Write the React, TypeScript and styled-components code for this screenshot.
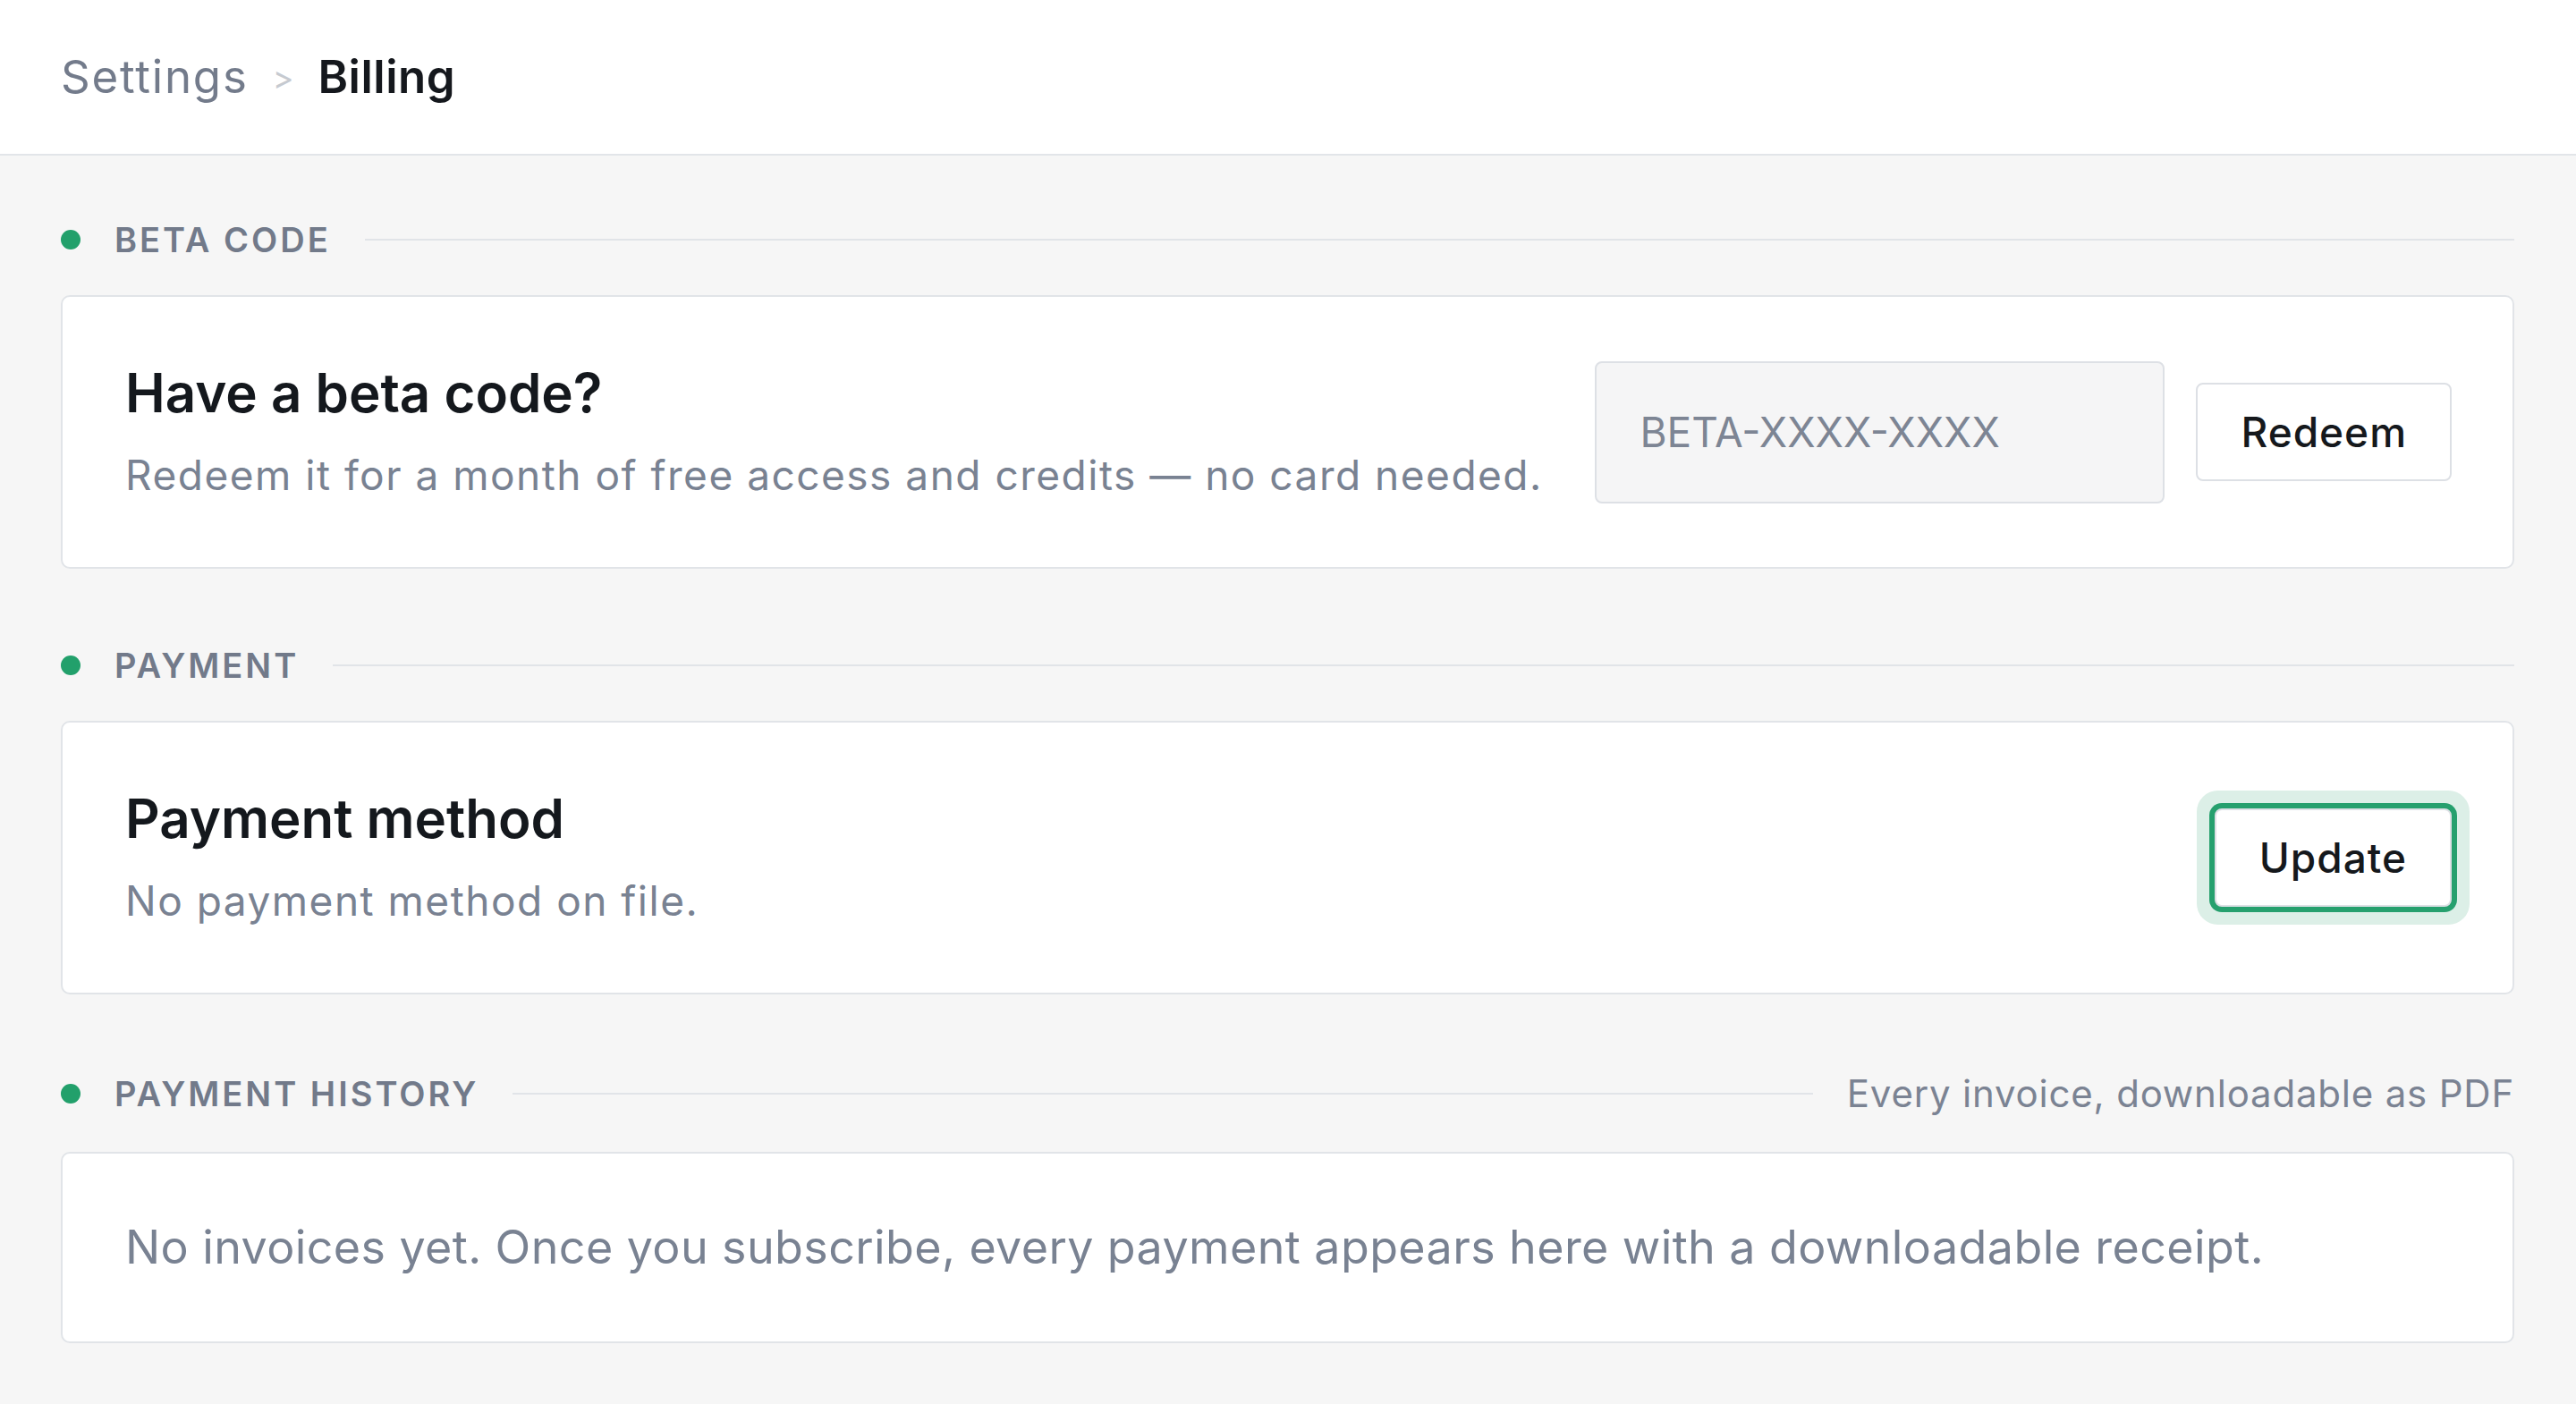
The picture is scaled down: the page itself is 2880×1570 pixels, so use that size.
import { FC, ReactNode } from "react";
import styled, { createGlobalStyle } from "styled-components";

const GlobalStyle = createGlobalStyle`
    html, body {
        margin: 0;
        padding: 0;
        background: #f6f6f6;
        font-family: Inter, "Noto Sans", "Liberation Sans", sans-serif;
    }
    * {
        box-sizing: border-box;
    }
`

type SectionProps = {
    title: string
    aside?: string
    children: ReactNode
}

const Section: FC<SectionProps> = ({ title, aside, children }) => (
    <SectionWrap>
        <SectionHead>
            <Dot />
            <Label>{title}</Label>
            <Rule />
            {aside && <Aside>{aside}</Aside>}
        </SectionHead>
        {children}
    </SectionWrap>
)

export default function App() {
    return <>
        <GlobalStyle />
        <Header>
            <Crumb>Settings</Crumb>
            <Sep>&gt;</Sep>
            <Current>Billing</Current>
        </Header>
        <Main>
            <Section title="Beta code">
                <Card>
                    <TextBlock>
                        <Title>Have a beta code?</Title>
                        <Desc>Redeem it for a month of free access and credits — no card needed.</Desc>
                    </TextBlock>
                    <CodeInput placeholder="BETA-XXXX-XXXX" />
                    <Button>Redeem</Button>
                </Card>
            </Section>
            <Section title="Payment">
                <Card>
                    <TextBlock>
                        <Title>Payment method</Title>
                        <Desc>No payment method on file.</Desc>
                    </TextBlock>
                    <Button focused>Update</Button>
                </Card>
            </Section>
            <Section title="Payment history" aside="Every invoice, downloadable as PDF">
                <Card compact>
                    <Empty>No invoices yet. Once you subscribe, every payment appears here with a downloadable receipt.</Empty>
                </Card>
            </Section>
        </Main>
    </>
}

const Header = styled.header`
    height: 174px;
    background: #fff;
    border-bottom: 2px solid #e2e5e9;
    display: flex;
    align-items: center;
    gap: 27px;
    padding: 0 68px 2px 68px;
`

const Crumb = styled.span`
    font-size: 51px;
    color: #737b8b;
    letter-spacing: 1.8px;
`

const Sep = styled.span`
    font-size: 36px;
    color: #c6cad0;
    margin-top: 4px;
`

const Current = styled.span`
    font-size: 51px;
    font-weight: 600;
    color: #15181d;
    letter-spacing: 0.5px;
`

const Main = styled.main`
    display: flex;
    flex-direction: column;
    gap: 88px;
    padding: 74px 69px 60px 68px;
`

const SectionWrap = styled.section`
    display: flex;
    flex-direction: column;
    gap: 42px;
`

const SectionHead = styled.div`
    min-height: 40px;
    display: flex;
    align-items: center;
`

const Dot = styled.span`
    width: 22px;
    height: 22px;
    border-radius: 50%;
    background: #22a06b;
    flex: none;
    margin-right: 38px;
`

const Label = styled.span`
    font-size: 38px;
    line-height: 40px;
    font-weight: 600;
    text-transform: uppercase;
    letter-spacing: 3px;
    color: #727a8a;
    margin-right: 38px;
`

const Rule = styled.span`
    flex: 1;
    height: 2px;
    background: #e1e4e8;
`

const Aside = styled.span`
    font-size: 42px;
    line-height: 46px;
    color: #7b8393;
    letter-spacing: 0.8px;
    margin-left: 38px;
`

const Card = styled.div<{ compact?: boolean }>`
    background: #fff;
    border: 2px solid #e1e4e8;
    border-radius: 10px;
    display: flex;
    align-items: center;
    padding: ${p => p.compact ? "69px 70px" : "71px 68px 71px 70px"};
    min-height: ${p => p.compact ? "214px" : "306px"};
`

const TextBlock = styled.div`
    flex: 1;
    display: flex;
    flex-direction: column;
    gap: 24px;
`

const Title = styled.h2`
    margin: 0;
    font-size: 60px;
    line-height: 72px;
    font-weight: 600;
    color: #14181d;
`

const Desc = styled.p`
    margin: 0;
    font-size: 46px;
    line-height: 64px;
    color: #798292;
    letter-spacing: 1.5px;
`

const Empty = styled.p`
    margin: 0;
    font-size: 52px;
    line-height: 72px;
    color: #798292;
    letter-spacing: 0.4px;
`

const CodeInput = styled.input`
    width: 637px;
    height: 159px;
    background: #f5f5f6;
    border: 2px solid #dde0e5;
    border-radius: 8px;
    padding: 0 48px;
    font-family: inherit;
    font-size: 46px;
    color: #14181d;
    margin-right: 35px;
    outline: none;
    &::placeholder {
        color: #7d8594;
    }
`

const Button = styled.button<{ focused?: boolean }>`
    height: 110px;
    padding: 0 48px;
    background: #fff;
    border: 2px solid #dde0e5;
    border-radius: 8px;
    font-family: inherit;
    font-size: 46px;
    font-weight: 500;
    letter-spacing: 1px;
    color: #15181c;
    cursor: pointer;
    box-shadow: ${p => p.focused ? "0 0 0 6px #26a06e, 0 0 0 20px #dcefe7" : "none"};
`
